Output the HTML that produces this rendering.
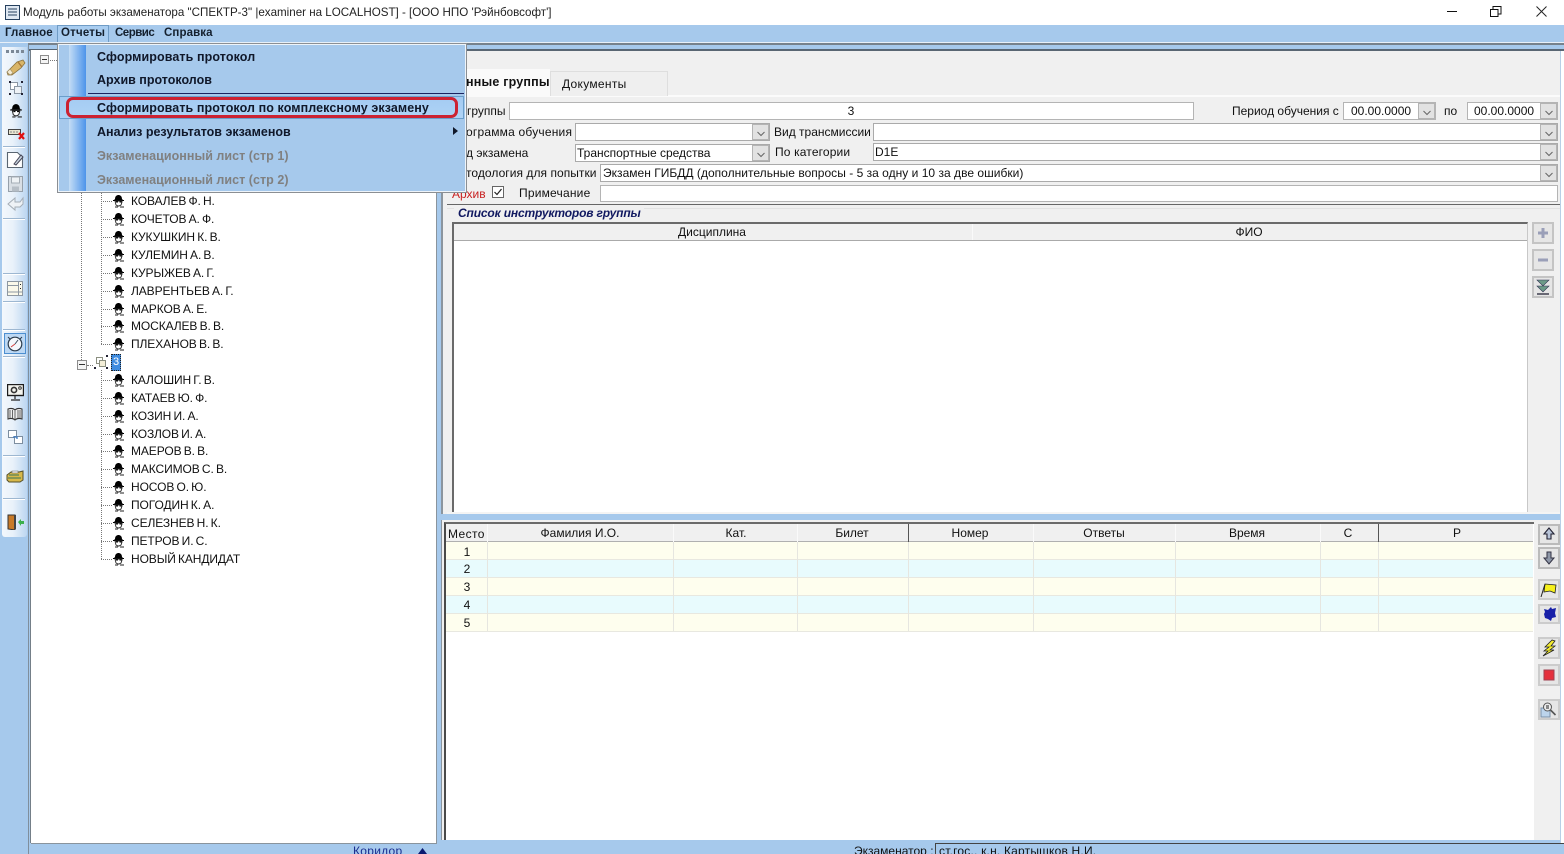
<!DOCTYPE html>
<html lang="ru"><head><meta charset="utf-8"><title>Спектр-3</title>
<style>
html,body{margin:0;padding:0;width:1564px;height:854px;overflow:hidden;background:#fff}
body{position:relative;font-family:"Liberation Sans",sans-serif;font-size:12px;color:#111}
.a{position:absolute}
.t{position:absolute;white-space:nowrap;line-height:14px;font-size:12px}
.t[style*="left:131px"]{letter-spacing:-.1px;word-spacing:-1px}
.c{transform:translateX(-50%)}
.m{position:absolute;white-space:nowrap;line-height:14px;font-size:12.5px;font-weight:bold;left:97px;color:#10182a}
.d{color:#808080}
.f{position:absolute;background:#fff;border:1px solid #b4b4b4;box-sizing:border-box}
.b{position:absolute;right:0;top:0;bottom:0;width:17px;background:#e2e2e2;border:1px solid #b4b4b4;box-sizing:border-box}
.b svg{position:absolute;left:3px;top:5px}
.p{position:absolute;left:112px;width:13px;height:14px}
.hl{position:absolute;left:101px;width:11px;border-top:1px dotted #777;height:0}
.tb{position:absolute;background:#e6e6e6;border:2px solid #c4c4c4;box-sizing:border-box}
.tb svg{position:absolute;left:0;top:0}
.sep{position:absolute;left:3px;width:22px;height:1px;background:#9db7d1;border-bottom:1px solid #fff}
.r{position:absolute;left:446px;width:1087px;height:17px;border-bottom:1px solid #e8e8e0}
.cv{position:absolute;width:1px;background:#e6e6e0;top:542px;height:89px}
.hv{position:absolute;width:1px;background:#c9c9c9;top:524px;height:18px}
</style></head><body>
<svg width="0" height="0" style="position:absolute"><defs>
<symbol id="pers" viewBox="0 0 13 14">
<path d="M1 6h11v1H1z" fill="#000"/><path d="M3 5c0-3 2-4 3.500-4S10 2 10 5l1 1H2z" fill="#000"/>
<path d="M3 7h7v1l-1 3-2 1H6L4 11z" fill="#fff" stroke="#222" stroke-width=".9"/>
<path d="M4 8h2M7.500 8h2" stroke="#000"/><path d="M3 13h3M8 13h4" stroke="#222"/>
</symbol>
<symbol id="chev" viewBox="0 0 10 8"><path d="M1.500 2l3.500 3.500L8.500 2" fill="none" stroke="#666" stroke-width="1"/></symbol>
</defs></svg>

<!-- title bar -->
<svg class="a" style="left:5px;top:5px" width="15" height="15"><rect x=".5" y=".5" width="14" height="14" fill="#dfe8f2" stroke="#26405e"/><path d="M3 4h9M3 7h9M3 10h9" stroke="#26405e"/></svg>
<div class="t" style="left:23px;top:6px;font-size:11.6px;color:#222">Модуль работы экзаменатора "СПЕКТР-3" |examiner на LOCALHOST] - [ООО НПО 'Рэйнбовсофт']</div>
<div class="a" style="left:1447px;top:11px;width:10px;height:1px;background:#111"></div>
<svg class="a" style="left:1490px;top:6px" width="12" height="11"><path d="M.5 3.500h7.500v7H.5zM3 3V.5h8V8H8" fill="none" stroke="#111"/></svg>
<svg class="a" style="left:1536px;top:6px" width="11" height="11"><path d="M.5.500l10 10M10.500.500l-10 10" stroke="#222"/></svg>

<!-- menu bar -->
<div class="a" style="left:0;top:25px;width:1564px;height:17px;background:#a6c9ec"></div>
<div class="a" style="left:57px;top:25px;width:52px;height:17px;background:#a9cdf0;border:1px solid #6f9cc6;border-bottom:0;box-sizing:border-box"></div>
<div class="t" style="left:5px;top:26px;font-size:11.5px;font-weight:bold;color:#14202e;letter-spacing:.1px">Главное</div>
<div class="t" style="left:61px;top:26px;font-size:11.5px;font-weight:bold;color:#14202e;letter-spacing:.2px">Отчеты</div>
<div class="t" style="left:115px;top:26px;font-size:11.5px;font-weight:bold;color:#14202e;letter-spacing:-.5px">Сервис</div>
<div class="t" style="left:164px;top:26px;font-size:11.5px;font-weight:bold;color:#14202e;letter-spacing:.1px">Справка</div>

<!-- strip below menu -->
<div class="a" style="left:0;top:42px;width:1564px;height:812px;background:#a6c9ec"></div>
<div class="a" style="left:0;top:42px;width:1564px;height:1px;background:#e8f0f8"></div>
<div class="a" style="left:28px;top:43px;width:1536px;height:2px;background:#77828c"></div>
<div class="a" style="left:28px;top:49px;width:1536px;height:2px;background:#596673"></div>
<div class="a" style="left:1560px;top:51px;width:4px;height:803px;background:#fff;border-left:1px solid #b7cfe6;box-sizing:border-box"></div>

<!-- left toolbar -->
<div class="a" style="left:2px;top:47px;width:25px;height:490px;background:linear-gradient(90deg,#f4f8fc 0%,#e8f1fa 45%,#bcd6f1 100%);border-radius:0 0 3px 3px"></div>
<div class="a" style="left:28px;top:45px;width:1px;height:809px;background:#7f8e9c"></div>
<div class="a" style="left:30px;top:50px;width:1px;height:793px;background:#747f88"></div>

<div class="a" style="left:6px;top:50px;width:19px;height:3px;background:repeating-linear-gradient(90deg,#7b8896 0 3px,transparent 3px 5px)"></div>
<svg class="a" style="left:6px;top:59px" width="20" height="18"><path d="M1 13L11 3l6-2 2 3-4 5-9 7-4 0z" fill="#d9b568" stroke="#8a7440" stroke-width=".8"/><path d="M1 13l3 3 3-2-3-4z" fill="#f4ead2" stroke="#9a8a60" stroke-width=".6"/><path d="M12 3l4 5" stroke="#a87838" stroke-width="1.400"/></svg>
<svg class="a" style="left:8px;top:80px" width="16" height="16"><rect x="2.500" y="2.500" width="7" height="7" fill="#fff" stroke="#8b97a4"/><rect x="6.500" y="6.500" width="7" height="7" fill="#eef2f6" stroke="#8b97a4"/><path d="M1 1h2v2H1zM13 1h2v2h-2zM1 13h2v2H1zM13 13h2v2h-2z" fill="#223"/></svg>
<svg class="a" style="left:9px;top:103px" width="14" height="15"><use href="#pers"/></svg>
<svg class="a" style="left:8px;top:128px" width="17" height="13"><rect x=".5" y="1.500" width="12" height="5" fill="#e8e4d0" stroke="#444"/><path d="M3 3v2M6 3v2M9 3v2" stroke="#888"/><path d="M11 5l5 6M16 5l-5 6" stroke="#e01010" stroke-width="2.200"/></svg>
<div class="sep" style="top:146px"></div>
<svg class="a" style="left:6px;top:151px" width="19" height="18"><path d="M1.500 1.500h10l5 5v10h-15z" fill="#fff" stroke="#5a6672" stroke-width="1.100"/><path d="M8 13l7-9 2 2-7 8z" fill="#c8d4e0" stroke="#445"/></svg>
<svg class="a" style="left:8px;top:176px" width="15" height="16"><path d="M.5.500h14v15H.5z" fill="#d8dee4" stroke="#96a0aa"/><rect x="3.500" y="1" width="8" height="6" fill="#eef2f5" stroke="#a5aeb6"/><rect x="4" y="10.500" width="7" height="5" fill="#b6bec6"/></svg>
<svg class="a" style="left:7px;top:196px" width="17" height="16"><path d="M8 2L1 8l7 6v-3h5l3-3V2l-3 4H8z" fill="#eef2f6" stroke="#a4adb6"/></svg>
<div class="sep" style="top:218px"></div>
<div class="sep" style="top:273px"></div>
<svg class="a" style="left:7px;top:281px" width="16" height="15"><rect x=".5" y=".5" width="15" height="14" fill="#fbf9ea" stroke="#8e98a2"/><path d="M1 4.500h10M1 11h14M11.500 1v13" stroke="#8e98a2"/><path d="M13 3h1v1h-1zM13 7h1v1h-1z" fill="#222"/></svg>
<div class="sep" style="top:301px"></div>
<div class="sep" style="top:329px"></div>
<div class="a" style="left:4px;top:333px;width:22px;height:21px;background:#bcd8f4;border:1px solid #4d8fd0;box-sizing:border-box"></div>
<svg class="a" style="left:6px;top:335px" width="18" height="17"><circle cx="9" cy="9" r="6.800" fill="#f4f8fc" stroke="#2a3b4c" stroke-width="1.200"/><path d="M9 9l-4 3" stroke="#d04040"/><path d="M9 9l3-4" stroke="#405060"/><path d="M2 2l2 2M16 2l-2 2" stroke="#2a3b4c"/></svg>
<div class="sep" style="top:356px"></div>
<svg class="a" style="left:7px;top:384px" width="17" height="17"><rect x=".5" y=".5" width="16" height="11" fill="#f4f4ee" stroke="#1c1c1c" stroke-width="1.400"/><circle cx="7" cy="6" r="2.600" fill="none" stroke="#333" stroke-width="1.600"/><circle cx="13" cy="4" r="1.300" fill="none" stroke="#333"/><path d="M8 12v3M4 16h9" stroke="#222" stroke-width="1.200"/></svg>
<svg class="a" style="left:7px;top:407px" width="17" height="14"><path d="M1 2c3-1 5-1 7 1 2-2 4-2 7-1v10c-3-1-5-1-7 1-2-2-4-2-7-1z" fill="#eee" stroke="#333"/><path d="M8 3v9M3 3v8M5.500 3v8M11 3v8M13 3v8" stroke="#666"/></svg>
<svg class="a" style="left:8px;top:430px" width="16" height="15"><rect x=".5" y=".5" width="8" height="7" fill="#fff" stroke="#7d8ea0"/><rect x="6.500" y="6.500" width="8" height="7" fill="#fff" stroke="#7d8ea0"/><path d="M5 7h4v2" fill="none" stroke="#3a78c0" stroke-width="1.300"/></svg>
<div class="sep" style="top:455px"></div>
<svg class="a" style="left:6px;top:469px" width="18" height="14"><path d="M1 6l4-3h8l4-1v9l-3 2H3l-2-2z" fill="#d8b84a" stroke="#55502a"/><path d="M3 6h10M2 9h13" stroke="#6d8a55" stroke-width="1.400"/><path d="M6 2h6v2H6z" fill="#eee" stroke="#666" stroke-width=".6"/></svg>
<div class="sep" style="top:498px"></div>
<svg class="a" style="left:7px;top:514px" width="18" height="16"><path d="M1 1h7v15l-7-1z" fill="#c87a28" stroke="#333"/><path d="M7 1h2v14H7z" fill="#444"/><path d="M11 8l3-3v2h3v3h-3v2z" fill="#3cb04c"/></svg>

<!-- tree panel -->
<div class="a" style="left:31px;top:50px;width:406px;height:794px;background:#fff;border-right:1px solid #8a949d;border-bottom:1px solid #8a949d;box-sizing:border-box"></div>
<div class="a" style="left:40px;top:55px;width:9px;height:9px;background:#f4f4f4;border:1px solid #8c8c8c;box-sizing:border-box"></div>
<div class="a" style="left:42px;top:59px;width:5px;height:1px;background:#333"></div>
<div class="a" style="left:50px;top:60px;width:7px;border-top:1px dotted #777"></div>
<div class="a" style="left:81px;top:192px;height:168px;border-left:1px dotted #777"></div>
<div class="a" style="left:101px;top:192px;height:152px;border-left:1px dotted #777"></div>
<div class="a" style="left:101px;top:370px;height:189px;border-left:1px dotted #777"></div>
<div class="a" style="left:77px;top:360px;width:10px;height:10px;background:#f4f4f4;border:1px solid #8c8c8c;box-sizing:border-box"></div>
<div class="a" style="left:79px;top:364px;width:6px;height:1px;background:#333"></div>
<div class="a" style="left:87px;top:365px;width:6px;border-top:1px dotted #777"></div>
<svg class="a" style="left:94px;top:355px" width="14" height="14"><rect x="2.500" y="2.500" width="6" height="6" fill="#fff" stroke="#8b8f80"/><rect x="5.500" y="5.500" width="6" height="6" fill="#f4efd8" stroke="#8b8f80"/><path d="M0 12h2v2H0zM12 0h2v2h-2zM12 12h2v2h-2z" fill="#223"/></svg>
<div class="a" style="left:111px;top:354px;width:10px;height:17px;background:#3f8ce0;outline:1px dotted #222;outline-offset:-1px;color:#fff;text-align:center;line-height:17px;font-size:11px">3</div>

<div class="hl" style="top:201px"></div><svg class="p" style="top:194px"><use href="#pers"/></svg><div class="t" style="left:131px;top:194px">КОВАЛЕВ Ф. Н.</div>
<div class="hl" style="top:219px"></div><svg class="p" style="top:212px"><use href="#pers"/></svg><div class="t" style="left:131px;top:212px">КОЧЕТОВ А. Ф.</div>
<div class="hl" style="top:237px"></div><svg class="p" style="top:230px"><use href="#pers"/></svg><div class="t" style="left:131px;top:230px">КУКУШКИН К. В.</div>
<div class="hl" style="top:255px"></div><svg class="p" style="top:248px"><use href="#pers"/></svg><div class="t" style="left:131px;top:248px">КУЛЕМИН А. В.</div>
<div class="hl" style="top:273px"></div><svg class="p" style="top:266px"><use href="#pers"/></svg><div class="t" style="left:131px;top:266px">КУРЫЖЕВ А. Г.</div>
<div class="hl" style="top:291px"></div><svg class="p" style="top:284px"><use href="#pers"/></svg><div class="t" style="left:131px;top:284px">ЛАВРЕНТЬЕВ А. Г.</div>
<div class="hl" style="top:309px"></div><svg class="p" style="top:302px"><use href="#pers"/></svg><div class="t" style="left:131px;top:302px">МАРКОВ А. Е.</div>
<div class="hl" style="top:326px"></div><svg class="p" style="top:319px"><use href="#pers"/></svg><div class="t" style="left:131px;top:319px">МОСКАЛЕВ В. В.</div>
<div class="hl" style="top:344px"></div><svg class="p" style="top:337px"><use href="#pers"/></svg><div class="t" style="left:131px;top:337px">ПЛЕХАНОВ В. В.</div>
<div class="hl" style="top:380px"></div><svg class="p" style="top:373px"><use href="#pers"/></svg><div class="t" style="left:131px;top:373px">КАЛОШИН Г. В.</div>
<div class="hl" style="top:398px"></div><svg class="p" style="top:391px"><use href="#pers"/></svg><div class="t" style="left:131px;top:391px">КАТАЕВ Ю. Ф.</div>
<div class="hl" style="top:416px"></div><svg class="p" style="top:409px"><use href="#pers"/></svg><div class="t" style="left:131px;top:409px">КОЗИН И. А.</div>
<div class="hl" style="top:434px"></div><svg class="p" style="top:427px"><use href="#pers"/></svg><div class="t" style="left:131px;top:427px">КОЗЛОВ И. А.</div>
<div class="hl" style="top:451px"></div><svg class="p" style="top:444px"><use href="#pers"/></svg><div class="t" style="left:131px;top:444px">МАЕРОВ В. В.</div>
<div class="hl" style="top:469px"></div><svg class="p" style="top:462px"><use href="#pers"/></svg><div class="t" style="left:131px;top:462px">МАКСИМОВ С. В.</div>
<div class="hl" style="top:487px"></div><svg class="p" style="top:480px"><use href="#pers"/></svg><div class="t" style="left:131px;top:480px">НОСОВ О. Ю.</div>
<div class="hl" style="top:505px"></div><svg class="p" style="top:498px"><use href="#pers"/></svg><div class="t" style="left:131px;top:498px">ПОГОДИН К. А.</div>
<div class="hl" style="top:523px"></div><svg class="p" style="top:516px"><use href="#pers"/></svg><div class="t" style="left:131px;top:516px">СЕЛЕЗНЕВ Н. К.</div>
<div class="hl" style="top:541px"></div><svg class="p" style="top:534px"><use href="#pers"/></svg><div class="t" style="left:131px;top:534px">ПЕТРОВ И. С.</div>
<div class="hl" style="top:559px"></div><svg class="p" style="top:552px"><use href="#pers"/></svg><div class="t" style="left:131px;top:552px">НОВЫЙ КАНДИДАТ</div>

<!-- right top panel -->
<div class="a" style="left:441px;top:51px;width:1119px;height:463px;background:#f0f0f0"></div>
<div class="a" style="left:441px;top:51px;width:2px;height:463px;background:#8b959e"></div>
<div class="a" style="left:441px;top:95px;width:1119px;height:2px;background:#fbfbfb"></div>
<div class="a" style="left:550px;top:71px;width:118px;height:25px;background:#efefef;border:1px solid #dedede;border-bottom:0;box-sizing:border-box"></div>
<div class="a" style="left:443px;top:69px;width:107px;height:28px;background:#fafafa"></div>
<div class="t" style="left:466px;top:75px;font-weight:bold;font-size:12.5px;letter-spacing:.2px">нные группы</div>
<div class="t" style="left:562px;top:77px;letter-spacing:.3px">Документы</div>

<div class="t" style="left:467px;top:104px">группы</div>
<div class="f" style="left:509px;top:102px;width:685px;height:18px"></div>
<div class="t c" style="left:851px;top:104px">3</div>
<div class="t" style="left:1232px;top:104px">Период обучения с</div>
<div class="f" style="left:1343px;top:102px;width:93px;height:18px"><div class="b"><svg width="10" height="8"><use href="#chev"/></svg></div></div>
<div class="t" style="left:1351px;top:104px">00.00.0000</div>
<div class="t" style="left:1444px;top:104px">по</div>
<div class="f" style="left:1467px;top:102px;width:91px;height:18px"><div class="b"><svg width="10" height="8"><use href="#chev"/></svg></div></div>
<div class="t" style="left:1474px;top:104px">00.00.0000</div>

<div class="t" style="left:466px;top:125px;letter-spacing:.2px">ограмма обучения</div>
<div class="f" style="left:575px;top:123px;width:195px;height:18px;border-color:#aaa"><div class="b"><svg width="10" height="8"><use href="#chev"/></svg></div></div>
<div class="t" style="left:774px;top:125px">Вид трансмиссии</div>
<div class="f" style="left:873px;top:123px;width:685px;height:18px;border-color:#aaa"><div class="b"><svg width="10" height="8"><use href="#chev"/></svg></div></div>

<div class="t" style="left:466px;top:146px">д экзамена</div>
<div class="f" style="left:575px;top:144px;width:195px;height:18px;border-color:#aaa"><div class="b"><svg width="10" height="8"><use href="#chev"/></svg></div></div>
<div class="t" style="left:577px;top:146px">Транспортные средства</div>
<div class="t" style="left:775px;top:145px;letter-spacing:.15px">По категории</div>
<div class="f" style="left:873px;top:143px;width:685px;height:18px;border-color:#aaa"><div class="b"><svg width="10" height="8"><use href="#chev"/></svg></div></div>
<div class="t" style="left:875px;top:145px">D1E</div>

<div class="t" style="left:466px;top:166px;letter-spacing:.05px">тодология для попытки</div>
<div class="f" style="left:600px;top:164px;width:958px;height:18px;border-color:#aaa"><div class="b"><svg width="10" height="8"><use href="#chev"/></svg></div></div>
<div class="t" style="left:603px;top:166px;letter-spacing:.02px">Экзамен ГИБДД (дополнительные вопросы - 5 за одну и 10 за две ошибки)</div>

<div class="t" style="left:452px;top:187px;color:#c82020">Архив</div>
<div class="a" style="left:492px;top:186px;width:12px;height:12px;background:#fff;border:1px solid #666;box-sizing:border-box"></div>
<svg class="a" style="left:493px;top:187px" width="10" height="10"><path d="M1.500 5l2.500 2.500L8.500 2" fill="none" stroke="#222" stroke-width="1.200"/></svg>
<div class="t" style="left:519px;top:186px;letter-spacing:.2px">Примечание</div>
<div class="f" style="left:600px;top:185px;width:958px;height:17px"></div>

<div class="a" style="left:447px;top:204px;width:1113px;height:1px;background:#666"></div>
<div class="a" style="left:447px;top:208px;width:1113px;height:1px;background:#e2e2e2"></div>
<div class="a" style="left:454px;top:207px;width:190px;height:13px;background:#f0f0f0"></div>
<div class="t" style="left:458px;top:206px;font-weight:bold;font-style:italic;font-size:12px;color:#101860;letter-spacing:-.15px">Список инструкторов группы</div>

<div class="a" style="left:452px;top:222px;width:1076px;height:290px;background:#fff;border-left:2px solid #6a6a6a;border-top:2px solid #6a6a6a;border-right:1px solid #c8c8c8;box-sizing:border-box"></div>
<div class="a" style="left:454px;top:224px;width:1073px;height:16px;background:#f0f0f0;border-bottom:1px solid #aaa"></div>
<div class="a" style="left:972px;top:224px;width:1px;height:16px;background:#fafafa"></div>
<div class="t c" style="left:712px;top:225px">Дисциплина</div>
<div class="t c" style="left:1249px;top:225px">ФИО</div>
<div class="a" style="left:447px;top:512px;width:1113px;height:2px;background:#f4f4f4"></div>

<div class="tb" style="left:1532px;top:222px;width:22px;height:22px"><svg width="18" height="18"><path d="M9 4v10M4 9h10" stroke="#9a9fb8" stroke-width="3"/></svg></div>
<div class="tb" style="left:1532px;top:249px;width:22px;height:22px"><svg width="18" height="18"><path d="M4 9h10" stroke="#9a9fb8" stroke-width="3"/></svg></div>
<div class="tb" style="left:1532px;top:276px;width:22px;height:22px"><svg width="18" height="18"><path d="M3 2h12L9 8zM3 8h12l-6 6z" fill="#6c9a88" stroke="#335" stroke-width=".6"/><path d="M3 16h12" stroke="#334" stroke-width="1.400"/></svg></div>

<!-- right bottom panel -->
<div class="a" style="left:441px;top:520px;width:1119px;height:320px;background:#f0f0f0;border-left:1px solid #8b959e;box-sizing:border-box"></div>
<div class="a" style="left:444px;top:522px;width:1090px;height:318px;background:#fff;border-left:2px solid #4a4a4a;border-top:2px solid #6a6a6a;box-sizing:border-box"></div>
<div class="a" style="left:446px;top:524px;width:1087px;height:18px;background:#f0f0f0;border-bottom:1px solid #b0b0b0;box-sizing:border-box"></div>
<div class="hv" style="left:487px;background:#fafafa"></div><div class="hv" style="left:673px;background:#fafafa"></div><div class="hv" style="left:797px;background:#fafafa"></div><div class="hv" style="left:908px;background:#555"></div><div class="hv" style="left:1033px;background:#fafafa"></div><div class="hv" style="left:1175px;background:#fafafa"></div><div class="hv" style="left:1320px;background:#fafafa"></div><div class="hv" style="left:1378px;background:#555"></div>
<div class="t" style="left:448px;top:527px;letter-spacing:.4px">Место</div>
<div class="t c" style="left:580px;top:526px">Фамилия И.О.</div>
<div class="t c" style="left:736px;top:526px">Кат.</div>
<div class="t c" style="left:852px;top:526px">Билет</div>
<div class="t c" style="left:970px;top:526px">Номер</div>
<div class="t c" style="left:1104px;top:526px">Ответы</div>
<div class="t c" style="left:1247px;top:526px">Время</div>
<div class="t c" style="left:1348px;top:526px">С</div>
<div class="t c" style="left:1457px;top:526px">Р</div>

<div class="r" style="top:542px;background:#fefeee"></div>
<div class="r" style="top:560px;background:#e8fbfd"></div>
<div class="r" style="top:578px;background:#fefeee"></div>
<div class="r" style="top:596px;background:#e8fbfd"></div>
<div class="r" style="top:614px;background:#fefeee"></div>
<div class="cv" style="left:487px"></div><div class="cv" style="left:673px"></div><div class="cv" style="left:797px"></div><div class="cv" style="left:908px"></div><div class="cv" style="left:1033px"></div><div class="cv" style="left:1175px"></div><div class="cv" style="left:1320px"></div><div class="cv" style="left:1378px"></div>
<div class="t c" style="left:467px;top:545px">1</div>
<div class="t c" style="left:467px;top:562px">2</div>
<div class="t c" style="left:467px;top:580px">3</div>
<div class="t c" style="left:467px;top:598px">4</div>
<div class="t c" style="left:467px;top:616px">5</div>

<div class="tb" style="left:1538px;top:524px;width:22px;height:21px;border-color:#bbb"><svg width="18" height="17"><path d="M9 2L4 8h3v5h4V8h3z" fill="#b8c4d8" stroke="#223" stroke-width="1.100"/></svg></div>
<div class="tb" style="left:1538px;top:547px;width:22px;height:22px;border-color:#bbb"><svg width="18" height="18"><path d="M7 3h4v6h3l-5 6-5-6h3z" fill="#8e97a8" stroke="#334" stroke-width="1"/></svg></div>
<div class="tb" style="left:1538px;top:579px;width:22px;height:21px;border-color:#ccc"><svg width="18" height="17"><path d="M5 3l11 1-1 8-5-2-6 1z" fill="#f6f01c" stroke="#222" stroke-width=".8"/><path d="M5 3L1 16" stroke="#222"/></svg></div>
<div class="tb" style="left:1538px;top:604px;width:22px;height:20px;border-color:#ccc"><svg width="18" height="16"><path d="M4 3l4 1 3-3 1 2 4-1-1 5 1 4-4 1-1 3-3-2-3-1-1-4 1-2z" fill="#1820a8"/></svg></div>
<div class="tb" style="left:1538px;top:637px;width:22px;height:22px;border-color:#ccc"><svg width="18" height="18"><path d="M12 1L5 8h4l-5 4h4l-5 5 11-6h-4l5-4h-4l4-5z" fill="#f4ec30" stroke="#222" stroke-width=".8"/></svg></div>
<div class="tb" style="left:1538px;top:664px;width:22px;height:22px;border-color:#ccc"><svg width="18" height="18"><rect x="4" y="4" width="10" height="10" fill="#e4303c" stroke="#a04050"/></svg></div>
<div class="tb" style="left:1538px;top:699px;width:22px;height:21px;border-color:#ccc"><svg width="18" height="17"><rect x="1" y="7" width="9" height="9" fill="#bcd4ec" stroke="#7a90a8"/><circle cx="7.500" cy="6" r="4" fill="#eee" stroke="#555"/><path d="M6 5h3M6 7h3" stroke="#222"/><path d="M10.500 9l5 5" stroke="#555" stroke-width="1.600"/></svg></div>

<!-- status bar -->
<div class="t" style="left:353px;top:844px;color:#1a2d90;letter-spacing:.3px">Коридор</div>
<svg class="a" style="left:418px;top:848px" width="9" height="6"><path d="M4.500 0L9 6H0z" fill="#0a1a70"/></svg>
<div class="t" style="left:854px;top:844px;color:#111">Экзаменатор :</div>
<div class="a" style="left:935px;top:843px;width:629px;height:11px;background:#a6c9ec;border-left:1px solid #444;border-top:1px solid #444;box-sizing:border-box"></div>
<div class="t" style="left:939px;top:844px;color:#111;letter-spacing:.2px">ст.гос., к.н. Картышков Н.И.</div>

<!-- dropdown menu -->
<div class="a" style="left:57px;top:43px;width:410px;height:150px;background:#a6c9ec;border:1px solid #8b8f93;box-shadow:inset 0 0 0 1px #eef4fa;box-sizing:border-box"></div>
<div class="a" style="left:69px;top:45px;width:17px;height:146px;background:linear-gradient(90deg,#c4ddf5,#4d94ea)"></div>
<div class="m" style="top:50px;letter-spacing:.1px">Сформировать протокол</div>
<div class="m" style="top:73px">Архив протоколов</div>
<div class="a" style="left:88px;top:93px;width:376px;height:1px;background:#1a2460"></div>
<div class="a" style="left:59px;top:96px;width:405px;height:23px;background:linear-gradient(#a4cbf2,#aed3f6);border:1px solid #6a9ecb;box-sizing:border-box"></div>
<div class="a" style="left:66px;top:97px;width:392px;height:21px;border:3px solid #cc2232;border-radius:7px;box-sizing:border-box"></div>
<div class="m" style="top:101px;letter-spacing:.09px">Сформировать протокол по комплексному экзамену</div>
<div class="m" style="top:125px">Анализ результатов экзаменов</div>
<svg class="a" style="left:453px;top:127px" width="5" height="8"><path d="M0 0l5 4-5 4z" fill="#10182a"/></svg>
<div class="m d" style="top:149px;letter-spacing:.04px">Экзаменационный лист (стр 1)</div>
<div class="m d" style="top:173px;letter-spacing:.04px">Экзаменационный лист (стр 2)</div>
</body></html>
